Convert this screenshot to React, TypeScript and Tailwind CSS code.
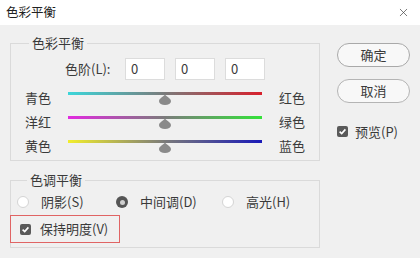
import { X } from "lucide-react"

const font = { fontFamily: '"Noto Sans CJK SC", "Noto Sans", sans-serif' }

interface SliderRow {
  left: string
  right: string
  track: string
}

const sliders: SliderRow[] = [
  { left: "青色", right: "红色", track: "bg-[linear-gradient(to_right,#3cd6da,#7a7a7a_50%,#d8202c)]" },
  { left: "洋红", right: "绿色", track: "bg-[linear-gradient(to_right,#e22ae0,#7c7c7c_50%,#34e23a)]" },
  { left: "黄色", right: "蓝色", track: "bg-[linear-gradient(to_right,#f2ee2c,#7a7a7a_50%,#1a1ab8)]" },
]

function Thumb() {
  return (
    <svg width="12" height="11" viewBox="0 0 12 11" className="absolute left-1/2 top-[6px] -translate-x-1/2">
      <path d="M6 0 C6.5 2.5 12 4 12 7.2 A6 3.8 0 0 1 0 7.2 C0 4 5.5 2.5 6 0 Z" fill="#8a8a8a" />
    </svg>
  )
}

function CheckBox() {
  return (
    <span className="flex h-[11px] w-[11px] items-center justify-center rounded-[2px] bg-[#5a5a5a]">
      <svg width="9" height="9" viewBox="0 0 9 9">
        <path d="M1.6 4.6 L3.7 6.6 L7.4 2.4" stroke="#fff" strokeWidth="1.6" fill="none" />
      </svg>
    </span>
  )
}

function Radio({ checked }: { checked?: boolean }) {
  if (checked) {
    return (
      <span className="flex h-[12px] w-[12px] items-center justify-center rounded-full bg-[#555]">
        <span className="h-[5px] w-[5px] rounded-full bg-[#cfcfcf]" />
      </span>
    )
  }
  return <span className="h-[12px] w-[12px] rounded-full border border-[#d4d4d4] bg-white" />
}

export default function App() {
  return (
    <div className="h-[258px] w-[420px] overflow-hidden bg-[#f0f0f0] text-[#3a3a3a]" style={font}>
      {/* Title bar */}
      <div className="flex h-[25px] items-center justify-between bg-white pl-[6px] pr-[10px]">
        <span className="text-[12.5px] leading-none text-[#222]">色彩平衡</span>
        <X className="h-[13px] w-[13px] text-[#444]" strokeWidth={1.3} />
      </div>

      <div className="flex pl-[10px] pt-[10px]">
        {/* Left column */}
        <div className="w-[310px]">
          <fieldset className="h-[126px] border border-[#dadada]">
            <legend className="ml-[18px] px-[3px] text-[13px] leading-[16px]">色彩平衡</legend>

            <div className="mt-[7px] flex items-center pl-[54px]">
              <span className="w-[48px] text-[13px] leading-[22px]">色阶(L):</span>
              <div className="ml-[12px] flex gap-[10px]">
                {[0, 1, 2].map((i) => (
                  <div
                    key={i}
                    className="h-[22px] w-[40px] border border-[#dcdcdc] bg-white pl-[5px] text-[13px] leading-[20px]"
                  >
                    0
                  </div>
                ))}
              </div>
            </div>

            <div className="mt-[8px] px-[14px]">
              {sliders.map((s) => (
                <div key={s.left} className="flex h-[24px] items-start gap-[17px]">
                  <span className="w-[26px] pt-[1px] text-[13px] leading-[18px]">{s.left}</span>
                  <div className="relative h-full flex-1">
                    <div className={`mt-[4px] h-[3px] w-full ${s.track}`} />
                    <Thumb />
                  </div>
                  <span className="w-[26px] pt-[1px] text-[13px] leading-[18px]">{s.right}</span>
                </div>
              ))}
            </div>
          </fieldset>

          <fieldset className="mt-[11px] h-[76px] border border-[#dadada]">
            <legend className="ml-[16px] px-[3px] text-[13px] leading-[16px]">色调平衡</legend>

            <div className="mt-[5px] flex h-[18px] items-center pl-[6px] text-[13px]">
              <div className="flex w-[99px] items-center gap-[12px]">
                <Radio />
                <span>阴影(S)</span>
              </div>
              <div className="flex w-[106px] items-center gap-[12px]">
                <Radio checked />
                <span>中间调(D)</span>
              </div>
              <div className="flex items-center gap-[12px]">
                <Radio />
                <span>高光(H)</span>
              </div>
            </div>

            <div className="-ml-[1px] mt-[4px] flex h-[28px] w-[110px] items-center gap-[9px] border border-[#e06464] pl-[9px] text-[13px]">
              <CheckBox />
              <span>保持明度(V)</span>
            </div>
          </fieldset>
        </div>

        {/* Right column */}
        <div className="ml-[17px] mt-[8px] w-[73px]">
          <button className="flex h-[24px] w-full items-center justify-center rounded-[12px] border border-[#a9a9a9] bg-[#f8f8f8] text-[13px]">
            确定
          </button>
          <button className="mt-[12px] flex h-[24px] w-full items-center justify-center rounded-[12px] border border-[#b4b4b4] bg-[#f8f8f8] text-[13px]">
            取消
          </button>
          <div className="mt-[19px] flex items-center gap-[7px] text-[13px]">
            <CheckBox />
            <span>预览(P)</span>
          </div>
        </div>
      </div>
    </div>
  )
}
